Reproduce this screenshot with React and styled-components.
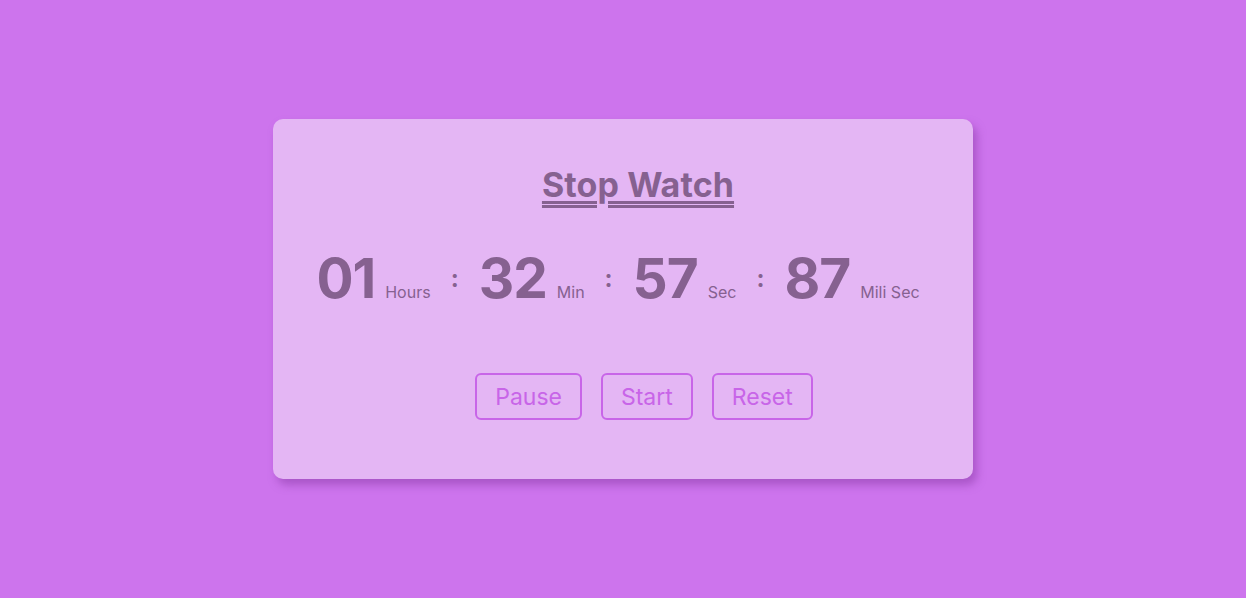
import React from "react";
import styled, { createGlobalStyle } from "styled-components";

const Global = createGlobalStyle`
  html, body { margin: 0; padding: 0; }
  body {
    background: #cd74ed;
    font-family: Inter, "Noto Sans", sans-serif;
  }
`;

const Page = styled.div`
  width: 100vw;
  height: 100vh;
  display: flex;
  align-items: center;
  justify-content: center;
`;

const Card = styled.div`
  width: 700px;
  height: 360px;
  box-sizing: border-box;
  background: #e4b6f4;
  border-radius: 10px;
  box-shadow: 4px 6px 8px rgba(140, 60, 170, 0.55);
  display: flex;
  flex-direction: column;
  align-items: center;
  padding-top: 45px;
`;

const Title = styled.h1`
  margin: 0 0 0 30px;
  font-size: 34px;
  font-weight: 700;
  color: #866190;
  text-decoration: underline double;
  text-decoration-thickness: 2.5px;
  text-underline-offset: 4px;
  letter-spacing: 0.1px;
`;

const Timer = styled.div`
  display: flex;
  align-items: baseline;
  margin-top: 40px;
  margin-right: 10px;
  color: #866190;
`;

const Digits = styled.span`
  font-size: 55px;
  font-weight: 700;
  letter-spacing: -1px;
`;

const Label = styled.span`
  font-size: 16px;
  margin-left: 10px;
`;

const Colon = styled.span`
  font-size: 24px;
  font-weight: 700;
  margin: 0 20px;
  position: relative;
  top: -11px;
`;

const Buttons = styled.div`
  display: flex;
  gap: 19px;
  margin-top: 62px;
  margin-left: 42px;
`;

const Button = styled.button`
  font-family: Inter, "Noto Sans", sans-serif;
  font-size: 23px;
  color: #c865e8;
  background: transparent;
  border: 2px solid #c865e8;
  border-radius: 6px;
  height: 47px;
  padding: 0 ${(p) => p.$pad}px;
  cursor: pointer;
`;

const units = [
  ["01", "Hours"],
  ["32", "Min"],
  ["57", "Sec"],
  ["87", "Mili Sec"],
];

export default function App() {
  return (
    <>
      <Global />
      <Page>
        <Card>
          <Title>Stop Watch</Title>
          <Timer>
            {units.map(([d, l], i) => (
              <React.Fragment key={l}>
                {i > 0 && <Colon>:</Colon>}
                <Digits>{d}</Digits>
                <Label>{l}</Label>
              </React.Fragment>
            ))}
          </Timer>
          <Buttons>
            <Button $pad={18}>Pause</Button>
            <Button $pad={18}>Start</Button>
            <Button $pad={18}>Reset</Button>
          </Buttons>
        </Card>
      </Page>
    </>
  );
}
